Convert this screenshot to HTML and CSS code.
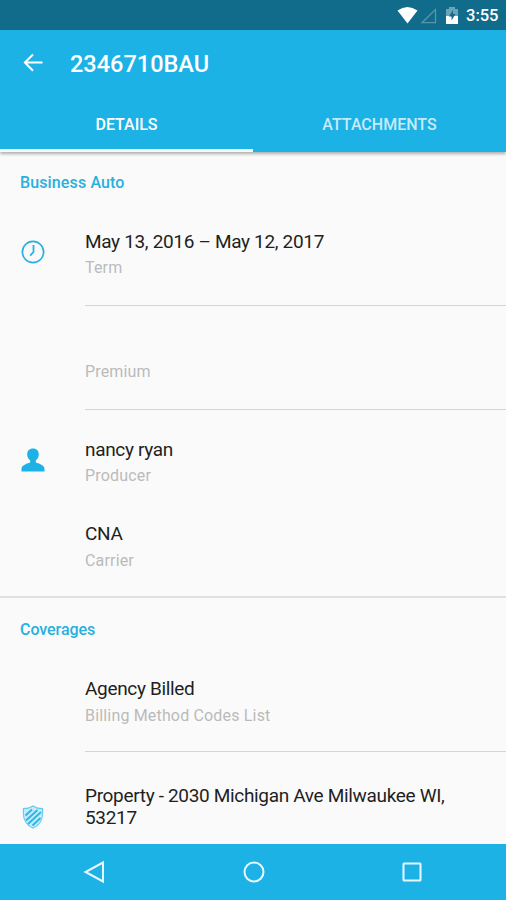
FILE: index.html
```html
<!DOCTYPE html>
<html lang="en">
<head>
<meta charset="utf-8">
<title>2346710BAU</title>
<link rel="stylesheet" href="styles.css">
</head>
<body>
<div class="screen">
  <div class="status">
    <svg class="status-icons" width="64" height="30" viewBox="0 0 64 30">
      <path d="M.5 10.500Q10.500 3.500 20.500 10.500L10.500 23.500Z" fill="#fff"/>
      <path d="M38.500 9.500V22.700H25Z" fill="none" stroke="#5795ad" stroke-width="1.300"/>
      <path d="M50 9h2V7h6v2h3v7H49V9Z" fill="#6ea3b7"/>
      <path d="M49 16h12v8H49Z" fill="#fff"/>
      <path d="M56 10l-4 6.500h2.500v4l4-6.500H56Z" fill="#116b8b"/>
    </svg>
    <span class="clock">3:55</span>
  </div>
  <header class="appbar">
    <div class="toolbar">
      <svg class="back" width="20" height="20" viewBox="0 0 20 20" fill="none" stroke="#fff" stroke-width="2"><path d="M19.500 9.500H2M10 1.500L1.900 9.500l8.100 8.200"/></svg>
      <h1 class="title">2346710BAU</h1>
    </div>
    <nav class="tabs">
      <div class="tab active"><span>DETAILS</span></div>
      <div class="tab"><span>ATTACHMENTS</span></div>
    </nav>
  </header>
  <main class="content">
    <section class="policy">
      <h2 class="heading">Business Auto</h2>
      <div class="row">
        <svg class="icon" width="24" height="24" viewBox="0 0 24 24" fill="none" stroke="#27b0e0"><circle cx="12" cy="12" r="10.600" stroke-width="1.700"/><path d="M12.500 5v7l-3.300 3.600" stroke-width="1.800"/></svg>
        <div class="body line"><p class="value">May 13, 2016 – May 12, 2017</p><p class="label">Term</p></div>
      </div>
      <div class="row">
        <div class="body line"><p class="value"></p><p class="label">Premium</p></div>
      </div>
      <div class="row">
        <svg class="icon" width="24" height="24" viewBox="0 0 24 24" fill="#1db2e6"><path d="M12 .5c-3.600 0-5.800 2.400-5.800 5.800 0 2.800 1.300 4.800 3 6.200v2.100C5 16 .5 17.500.5 21v2.500h23V21c0-3.500-4.500-5-8.700-6.400v-2.100c1.700-1.400 3-3.400 3-6.200C17.800 2.900 15.600.5 12 .5Z"/></svg>
        <div class="body producer"><p class="value">nancy ryan</p><p class="label">Producer</p></div>
      </div>
      <div class="row">
        <div class="body carrier"><p class="value">CNA</p><p class="label">Carrier</p></div>
      </div>
    </section>
    <section class="coverages">
      <h2 class="heading">Coverages</h2>
      <div class="row">
        <div class="body line billing"><p class="value">Agency Billed</p><p class="label">Billing Method Codes List</p></div>
      </div>
      <div class="row property">
        <svg class="icon" width="22" height="24" viewBox="0 0 22 24"><path d="M11 1C8 3 5 3.700 1.500 3.700c-.8 8.500.5 15.500 9.500 19.300 9-3.800 10.300-10.800 9.500-19.300C17 3.700 14 3 11 1Z" fill="#c4ebf9" stroke="#65c8ec" stroke-width="1.200"/><path d="M3.500 10.500l6.500-6M4 15.500L15.500 5M6 19L19 7M10.500 20.500l8-7.500" stroke="#2db5e5" stroke-width="1.900"/></svg>
        <div class="body"><p class="value">Property - 2030 Michigan Ave Milwaukee WI, 53217</p></div>
      </div>
    </section>
  </main>
  <footer class="navbar">
    <svg width="24" height="24" viewBox="0 0 24 24" fill="none" stroke="#e8f8ff" stroke-width="2"><path d="M20 2.500v19L2.500 12Z"/></svg>
    <svg width="24" height="24" viewBox="0 0 24 24" fill="none" stroke="#e8f8ff" stroke-width="2"><circle cx="12" cy="12" r="9.500"/></svg>
    <svg width="24" height="24" viewBox="0 0 24 24" fill="none" stroke="#e8f8ff" stroke-width="2"><rect x="3.500" y="3.500" width="17" height="17" rx=".5"/></svg>
  </footer>
</div>
</body>
</html>
```

FILE: styles.css
```css
* { box-sizing: border-box; }
body { margin: 0; font-family: Roboto, "Liberation Sans", sans-serif; background: #fafafa; }
h1, h2, p { margin: 0; }
svg { display: block; flex: none; }
.screen { width: 506px; height: 900px; display: flex; flex-direction: column; overflow: hidden; }
.status { height: 30px; flex: none; background: #116b8b; display: flex; align-items: center; justify-content: flex-end; padding-right: 8px; }
.clock { width: 32px; margin-left: 5px; padding-top: 2px; font-size: 16.500px; font-weight: 500; line-height: 20px; color: #fff; white-space: nowrap; }
.appbar { height: 122px; flex: none; background: #1db2e6; box-shadow: 0 2px 3px rgba(0,0,0,.3); position: relative; }
.toolbar { height: 66px; display: flex; align-items: center; padding-left: 23px; }
.title { margin-left: 27px; padding-top: 1px; font-size: 23.500px; font-weight: 500; line-height: 28px; color: #fff; }
.tabs { display: flex; height: 56px; }
.tab { flex: 1; display: flex; justify-content: center; padding-top: 19px; font-size: 16px; font-weight: 500; line-height: 20px; color: #c7eaf8; }
.tab.active { color: #fff; border-bottom: 3px solid #f2fbff; }
.content { flex: 1; min-height: 0; overflow: hidden; }
.policy { height: 446px; border-bottom: 2px solid #e0e0e0; }
.heading { height: 62px; padding: 21px 0 0 20px; font-size: 16px; font-weight: 500; line-height: 20px; letter-spacing: .13px; color: #27b0e0; }
.coverages .heading { padding-top: 22px; letter-spacing: -.05px; }
.row { position: relative; display: flex; padding-left: 85px; }
.icon { position: absolute; left: 21px; top: 26px; }
.body { flex: 1; height: 104px; padding-top: 17px; }
.line { height: 92px; margin-bottom: 12px; border-bottom: 1px solid #d5d5d5; }
.value { min-height: 22px; font-size: 19px; line-height: 22px; letter-spacing: -.33px; color: #1f1f1f; }
.label { margin-top: 5px; font-size: 16px; line-height: 20px; letter-spacing: .17px; color: #bababa; }
.producer { height: 84px; }
.carrier .label, .billing .label { margin-top: 6px; }
.billing { padding-top: 18px; }
.property .icon { left: 22px; top: 41px; }
.property .body { padding: 21px 50px 0 0; }
.navbar { height: 56px; flex: none; background: #1db2e6; display: flex; align-items: center; justify-content: space-between; padding: 0 82px 0 83px; }
```
